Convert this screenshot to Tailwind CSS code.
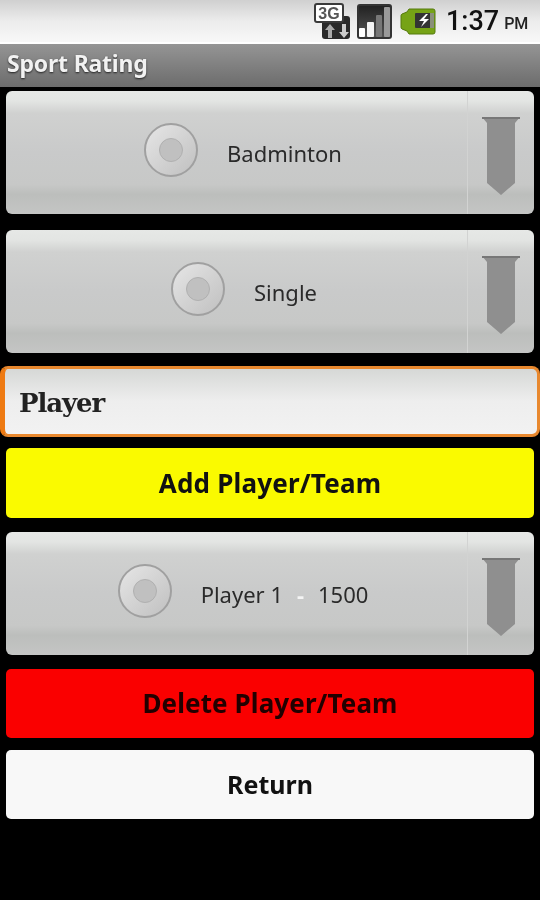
<!DOCTYPE html>
<html lang="en">
<head>
    <meta charset="UTF-8">
    <meta name="viewport" content="width=device-width, initial-scale=1.0">
    <title>Sport Rating</title>
    <script src="https://cdn.jsdelivr.net/npm/@tailwindcss/browser@4"></script>
</head>
<body class="bg-black w-[540px] h-[900px] overflow-hidden font-['Noto_Sans',sans-serif]">

    <!-- status bar -->
    <div class="h-[42px] bg-gradient-to-b from-[#d0d0d0] via-[#ececec] to-[#f8f8f8] flex items-center pl-[314px] blur-[0.6px]">
        <svg width="37" height="37" viewBox="0 0 37 37" class="shrink-0">
            <rect x="8" y="13" width="28" height="23" rx="3" fill="#2a2a2a"/>
            <rect x="1" y="1" width="28" height="18" rx="2" fill="#fff" stroke="#3a3a3a" stroke-width="2"/>
            <text x="15" y="16" text-anchor="middle" font-family="Liberation Sans" font-size="16" font-weight="700" fill="#555">3G</text>
            <path d="M14 35v-8h-3l5-6 5 6h-3v8z" fill="#aaa"/>
            <path d="M28 21v8h-3l5 6 5-6h-3v-8z" fill="#ccc"/>
        </svg>
        <svg width="35" height="35" viewBox="0 0 35 35" class="ml-[6px] shrink-0">
            <defs><linearGradient id="sig" x1="0" y1="0" x2="0" y2="1"><stop offset="0" stop-color="#222"/><stop offset="1" stop-color="#555"/></linearGradient></defs>
            <rect x="0" y="0" width="35" height="35" rx="3" fill="#333"/>
            <rect x="2" y="2" width="31" height="31" rx="1" fill="url(#sig)"/>
            <rect x="2" y="24" width="6" height="9" rx="1" fill="#fff"/>
            <rect x="10" y="18" width="7" height="15" rx="1" fill="#f4f4f4"/>
            <rect x="19" y="11" width="6" height="22" rx="1" fill="#777"/>
            <rect x="27" y="3" width="6" height="30" rx="1" fill="#999"/>
        </svg>
        <svg width="36" height="27" viewBox="0 0 36 27" class="ml-[8px] shrink-0">
            <path d="M9 1h24a2 2 0 0 1 2 2v21a2 2 0 0 1-2 2H9l-2-3-5-2a2 2 0 0 1-1-2V8a2 2 0 0 1 1-2l5-2z" fill="#76a316" stroke="#557a0c" stroke-width="1"/>
            <rect x="15" y="5" width="19" height="15" rx="1" fill="#333"/>
            <path d="M26 6l-7 7h5l-3 6 8-8h-5l4-5z" fill="#fff"/>
            <path d="M30 5h4v15h-4z" fill="#8a8f7a"/>
        </svg>
        <span class="ml-[10px] text-[27px] leading-none font-medium text-[#111] font-['Roboto',sans-serif]">1:37</span>
        <span class="ml-[5px] mt-[6px] text-[16px] leading-none font-medium text-[#222] font-['Roboto',sans-serif]">PM</span>
    </div>
    <div class="h-[2px] bg-white"></div>

    <!-- title bar -->
    <div class="h-[43px] bg-gradient-to-b from-[#959595] to-[#6c6c6c] flex items-center pl-[7px] pb-[5px]">
        <h1 class="text-[23px] leading-none font-bold tracking-[-0.2px] text-[#f2f2f2] [text-shadow:0_1px_2px_#222] blur-[0.5px]">Sport Rating</h1>
    </div>

    <!-- spinner: sport -->
    <div class="mt-[4px] mx-[6px] h-[123px] rounded-[6px] flex bg-[linear-gradient(#e6e8e6_0,#e3e5e3_8%,#d0d1d0_18%,#c9caca_50%,#c7c8c7_76%,#bcbebc_84%,#c4c5c4_100%)]">
        <div class="flex-1 flex items-center justify-center gap-[29px] pl-[13px] blur-[0.5px]">
            <div class="mb-[5px] w-[54px] h-[54px] rounded-full border-2 border-[#a0a0a0] bg-gradient-to-br from-[#e6e6e6] to-[#c0c0c0] flex items-center justify-center">
                <div class="w-[24px] h-[24px] rounded-full bg-[#c0c0c0] border border-[#b0b0b0]"></div>
            </div>
            <span class="text-[22px] leading-none text-[#2a2a2a]">Badminton</span>
        </div>
        <div class="w-[67px] border-l border-[#d2d3d2] flex justify-center pt-[26px]">
            <svg width="38" height="78" viewBox="0 0 38 78" class="blur-[0.4px]"><path d="M0 0h38l-5 6v60L19 78 5 66V6z" fill="#8f8f8f"/><path d="M0 0h38v2H0z" fill="#777"/></svg>
        </div>
    </div>

    <!-- spinner: mode -->
    <div class="mt-[16px] mx-[6px] h-[123px] rounded-[6px] flex bg-[linear-gradient(#e6e8e6_0,#e3e5e3_8%,#d0d1d0_18%,#c9caca_50%,#c7c8c7_76%,#bcbebc_84%,#c4c5c4_100%)]">
        <div class="flex-1 flex items-center justify-center gap-[29px] pl-[15px] blur-[0.5px]">
            <div class="mb-[5px] w-[54px] h-[54px] rounded-full border-2 border-[#a0a0a0] bg-gradient-to-br from-[#e6e6e6] to-[#c0c0c0] flex items-center justify-center">
                <div class="w-[24px] h-[24px] rounded-full bg-[#c0c0c0] border border-[#b0b0b0]"></div>
            </div>
            <span class="text-[22px] leading-none text-[#2a2a2a]">Single</span>
        </div>
        <div class="w-[67px] border-l border-[#d2d3d2] flex justify-center pt-[26px]">
            <svg width="38" height="78" viewBox="0 0 38 78" class="blur-[0.4px]"><path d="M0 0h38l-5 6v60L19 78 5 66V6z" fill="#8f8f8f"/><path d="M0 0h38v2H0z" fill="#777"/></svg>
        </div>
    </div>

    <!-- player input -->
    <div class="mt-[13px] h-[71px] rounded-[8px] border-[3px] border-l-[5px] border-[#e8882e] border-l-[#ee7a12] bg-gradient-to-b from-[#d6d8d6] via-[#eeeeee] to-[#f2f2f2] flex items-center pl-[14px]">
        <span class="text-[26px] leading-none font-bold text-[#222] font-['DejaVu_Serif',serif] tracking-[-1.1px] mt-[2px] blur-[0.4px]">Player</span>
    </div>

    <!-- add -->
    <button class="block mt-[11px] mx-[6px] w-[528px] h-[70px] rounded-[5px] bg-[#fafa00] text-[26px] font-bold tracking-[0.2px] text-[#111]"><span class="blur-[0.4px] inline-block">Add Player/Team</span></button>

    <!-- spinner: player -->
    <div class="mt-[14px] mx-[6px] h-[123px] rounded-[6px] flex bg-[linear-gradient(#e6e8e6_0,#e3e5e3_8%,#d0d1d0_18%,#c9caca_50%,#c7c8c7_76%,#bcbebc_84%,#c4c5c4_100%)]">
        <div class="flex-1 flex items-center justify-center gap-[29px] pl-[13px] blur-[0.5px]">
            <div class="mb-[5px] w-[54px] h-[54px] rounded-full border-2 border-[#a0a0a0] bg-gradient-to-br from-[#e6e6e6] to-[#c0c0c0] flex items-center justify-center">
                <div class="w-[24px] h-[24px] rounded-full bg-[#c0c0c0] border border-[#b0b0b0]"></div>
            </div>
            <span class="text-[22px] leading-none text-[#2a2a2a] whitespace-pre">Player 1<span class="mx-[14px] text-[#f4f4f4] font-bold">-</span>1500</span>
        </div>
        <div class="w-[67px] border-l border-[#d2d3d2] flex justify-center pt-[26px]">
            <svg width="38" height="78" viewBox="0 0 38 78" class="blur-[0.4px]"><path d="M0 0h38l-5 6v60L19 78 5 66V6z" fill="#8f8f8f"/><path d="M0 0h38v2H0z" fill="#777"/></svg>
        </div>
    </div>

    <!-- delete / return -->
    <button class="block mt-[14px] mx-[6px] w-[528px] h-[69px] rounded-[5px] bg-[#fa0000] text-[26px] font-bold tracking-[0.1px] text-[#220000]"><span class="blur-[0.4px] inline-block -mt-[2px]">Delete Player/Team</span></button>
    <button class="block mt-[12px] mx-[6px] w-[528px] h-[69px] rounded-[5px] bg-[#f8f8f8] text-[25px] font-bold text-[#111]"><span class="blur-[0.4px] inline-block -mt-[2px]">Return</span></button>

</body>
</html>
